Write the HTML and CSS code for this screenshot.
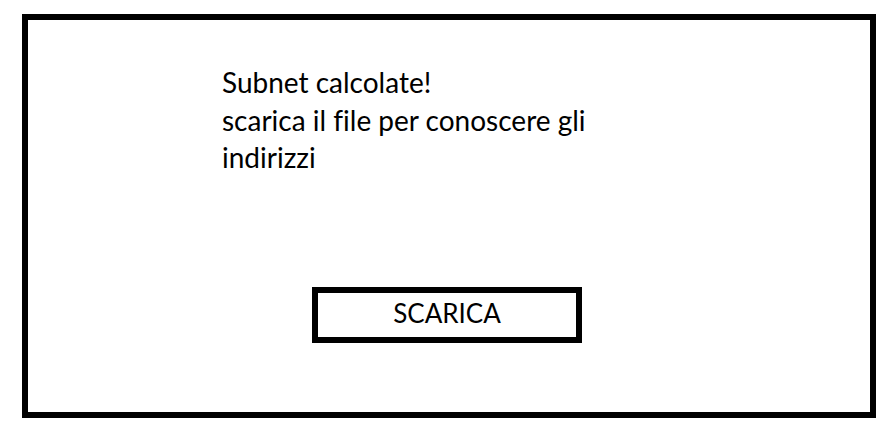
FILE: index.html
```html
<!DOCTYPE html>
<html lang="it">
<head>
    <meta charset="UTF-8">
    <meta name="viewport" content="width=device-width, initial-scale=1.0">
    <title>Subnet calcolate</title>
    <link rel="stylesheet" href="styles.css">
</head>
<body>
    <div class="panel">
        <p class="message">
            Subnet calcolate!<br>
            scarica il file per conoscere gli<br>
            indirizzi
        </p>
        <button type="button" class="download">SCARICA</button>
    </div>
</body>
</html>
```

FILE: styles.css
```css
body {
    background-color: #fff;
    font-family: Lato, "Open Sans", sans-serif;
    font-variant-ligatures: none;
    margin: 0;
    padding: 14px 0 0 22px;
}

.panel {
    display: flex;
    flex-direction: column;
    align-items: flex-start;
    box-sizing: border-box;
    width: 854px;
    height: 404px;
    border: 6px solid #000;
    padding: 44px 0 0 194px;
}

.message {
    margin: 0;
    font-size: 28px;
    line-height: 37.5px;
    color: #000;
}

.download {
    box-sizing: border-box;
    width: 270px;
    height: 56px;
    margin: 110px 0 0 90px;
    border: 6px solid #000;
    background-color: #fff;
    color: #000;
    font-family: inherit;
    font-size: 26px;
    padding: 0 0 3px;
    cursor: pointer;
}
```
